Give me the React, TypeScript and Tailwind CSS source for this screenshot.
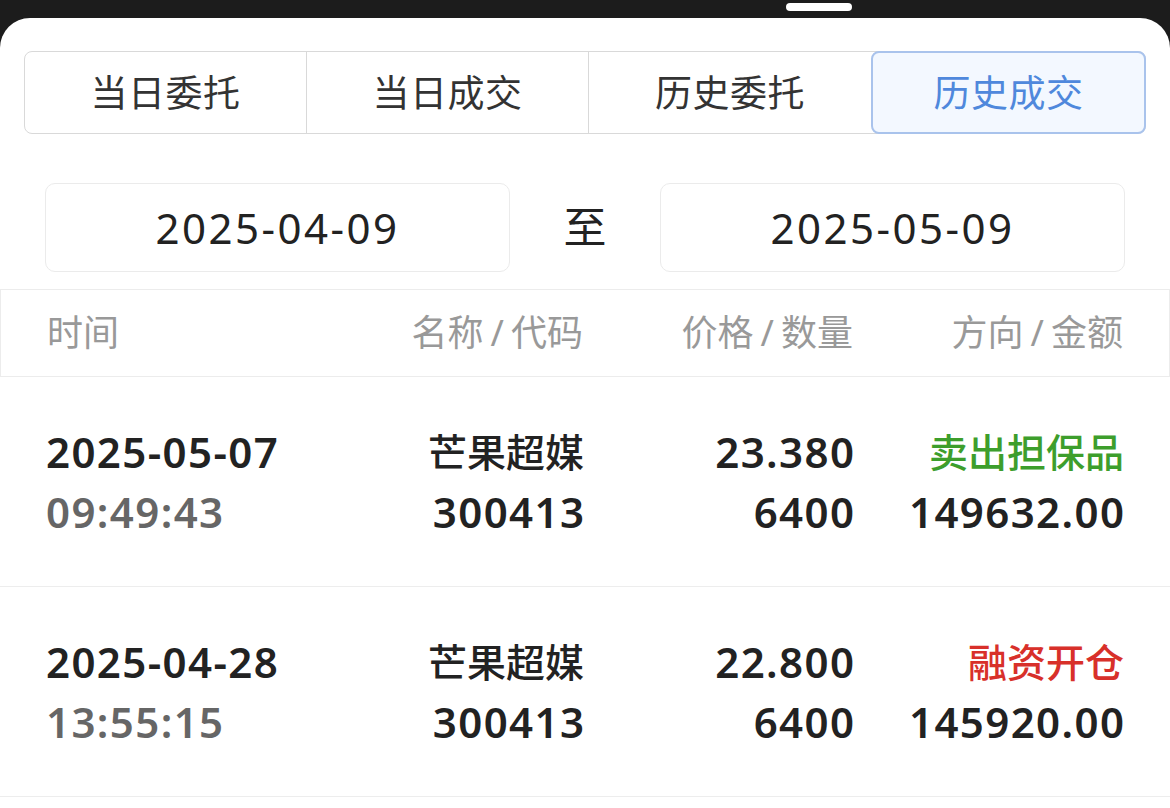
import { useState } from 'react'

const tabs = ['当日委托', '当日成交', '历史委托', '历史成交'] as const

const trades = [
  {
    date: '2025-05-07',
    time: '09:49:43',
    name: '芒果超媒',
    code: '300413',
    price: '23.380',
    qty: '6400',
    side: '卖出担保品',
    sideColor: 'text-[#3d9e2c]',
    amount: '149632.00',
  },
  {
    date: '2025-04-28',
    time: '13:55:15',
    name: '芒果超媒',
    code: '300413',
    price: '22.800',
    qty: '6400',
    side: '融资开仓',
    sideColor: 'text-[#d8302a]',
    amount: '145920.00',
  },
]

const font = "font-['Noto_Sans','Noto_Sans_CJK_SC',sans-serif]"
const num = 'text-[42px] font-semibold tracking-[1.4px] -mr-[1.4px]'

function HeadCell({ a, b, right = true }: { a: string; b?: string; right?: boolean }) {
  return (
    <span className={right ? 'text-right' : ''}>
      {a}
      {b ? (
        <>
          <span className="mx-[7px]">/</span>
          {b}
        </>
      ) : null}
    </span>
  )
}

export default function App() {
  const [active, setActive] = useState(3)

  return (
    <div className={`flex h-[808px] w-[1170px] flex-col overflow-hidden bg-[#1c1c1c] ${font}`}>
      {/* status strip */}
      <div className="flex h-[18px] shrink-0 pl-[786px] pt-[3px]">
        <div className="h-[8px] w-[66px] rounded-full bg-white" />
      </div>

      <div className="flex flex-1 flex-col rounded-t-[30px] bg-white">
        {/* tabs */}
        <div className="mx-[24px] mt-[33px] grid h-[83px] grid-cols-[282px_282px_282px_1fr] rounded-[8px] border border-[#d9d9d9]">
          {tabs.map((tab, i) => {
            const isActive = active === i
            return (
              <button
                key={tab}
                type="button"
                onClick={() => setActive(i)}
                className={
                  isActive
                    ? '-my-px -mr-px flex items-center justify-center rounded-[8px] border-2 border-[#a9c3ec] bg-[#f3f8ff] text-[37px] tracking-[0.5px] text-[#4f88dc]'
                    : `flex items-center justify-center text-[37px] tracking-[0.5px] text-[#333333] ${i < 2 ? 'border-r border-[#d9d9d9]' : ''}`
                }
              >
                {tab}
              </button>
            )
          })}
        </div>

        {/* date range */}
        <div className="mt-[49px] flex items-center justify-between px-[45px]">
          <div className="flex h-[89px] w-[465px] items-center justify-center rounded-[10px] border border-[#ebebeb] text-[42px] tracking-[2.5px] text-[#222222]">
            2025-04-09
          </div>
          <span className="text-[43px] text-[#222222]">至</span>
          <div className="flex h-[89px] w-[465px] items-center justify-center rounded-[10px] border border-[#ebebeb] text-[42px] tracking-[2.5px] text-[#222222]">
            2025-05-09
          </div>
        </div>

        {/* table header */}
        <div className="mt-[17px] grid h-[88px] grid-cols-[1fr_270px_270px_270px] items-center border border-[#ececec] px-[46px] text-[36px] text-[#999999]">
          <HeadCell a="时间" right={false} />
          <HeadCell a="名称" b="代码" />
          <HeadCell a="价格" b="数量" />
          <HeadCell a="方向" b="金额" />
        </div>

        {/* rows */}
        {trades.map((t) => (
          <div
            key={t.date + t.time}
            className="grid h-[210px] shrink-0 grid-cols-[1fr_270px_270px_270px] content-center border-b border-[#ededed] px-[46px] leading-[60px]"
          >
            <div className="flex flex-col items-start">
              <span className={`${num} text-[#222222]`}>{t.date}</span>
              <span className={`${num} text-[#666666]`}>{t.time}</span>
            </div>
            <div className="flex flex-col items-end">
              <span className="text-[39px] font-medium text-[#222222]">{t.name}</span>
              <span className={`${num} text-[#222222]`}>{t.code}</span>
            </div>
            <div className="flex flex-col items-end">
              <span className={`${num} text-[#222222]`}>{t.price}</span>
              <span className={`${num} text-[#222222]`}>{t.qty}</span>
            </div>
            <div className="flex flex-col items-end">
              <span className={`text-[39px] font-medium ${t.sideColor}`}>{t.side}</span>
              <span className={`${num} text-[#222222]`}>{t.amount}</span>
            </div>
          </div>
        ))}
      </div>
    </div>
  )
}
